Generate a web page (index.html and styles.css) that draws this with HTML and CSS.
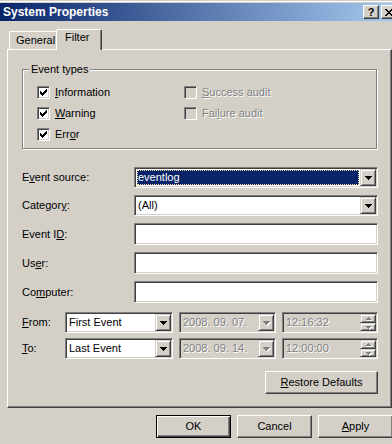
FILE: index.html
```html
<!DOCTYPE html>
<html lang="en">
<head>
    <meta charset="UTF-8">
    <meta name="viewport" content="width=device-width, initial-scale=1.0">
    <title>System Properties</title>
    <link rel="stylesheet" href="styles.css">
</head>
<body>

<div class="window">
    <!-- Title bar -->
    <div class="titlebar">
        <span class="title">System Properties</span>
        <div class="title-buttons">
            <span class="title-btn">?</span>
            <span class="title-btn">
                <svg width="8" height="7" viewBox="0 0 8 7" shape-rendering="crispEdges"><path d="M0 0h2v1h1v1h2v-1h1v-1h2v1h-1v1h-1v1h-1v1h1v1h1v1h1v1h-2v-1h-1v-1h-2v1h-1v1h-2v-1h1v-1h1v-1h1v-1h-1v-1h-1v-1h-1z"/></svg>
            </span>
        </div>
    </div>

    <!-- Tabs -->
    <div class="tabs">
        <div class="tab">General</div>
        <div class="tab active">Filter</div>
    </div>

    <div class="panel">
        <!-- Event types group -->
        <fieldset class="group">
            <legend>Event types</legend>
            <div class="checks">
                <div class="check">
                    <span class="box"><svg class="tick" width="7" height="7" viewBox="0 0 7 7" shape-rendering="crispEdges"><path d="M6 0h1v1h-1z M5 1h2v1h-2z M0 2h1v1h-1z M4 2h3v1h-3z M0 3h2v1h-2z M3 3h3v1h-3z M0 4h5v1h-5z M1 5h3v1h-3z M2 6h1v1h-1z"/></svg></span>
                    <span class="text"><u>I</u>nformation</span>
                </div>
                <div class="check disabled">
                    <span class="box"></span>
                    <span class="text"><u>S</u>uccess audit</span>
                </div>
                <div class="check">
                    <span class="box"><svg class="tick" width="7" height="7" viewBox="0 0 7 7" shape-rendering="crispEdges"><path d="M6 0h1v1h-1z M5 1h2v1h-2z M0 2h1v1h-1z M4 2h3v1h-3z M0 3h2v1h-2z M3 3h3v1h-3z M0 4h5v1h-5z M1 5h3v1h-3z M2 6h1v1h-1z"/></svg></span>
                    <span class="text"><u>W</u>arning</span>
                </div>
                <div class="check disabled">
                    <span class="box"></span>
                    <span class="text">Fai<u>l</u>ure audit</span>
                </div>
                <div class="check">
                    <span class="box"><svg class="tick" width="7" height="7" viewBox="0 0 7 7" shape-rendering="crispEdges"><path d="M6 0h1v1h-1z M5 1h2v1h-2z M0 2h1v1h-1z M4 2h3v1h-3z M0 3h2v1h-2z M3 3h3v1h-3z M0 4h5v1h-5z M1 5h3v1h-3z M2 6h1v1h-1z"/></svg></span>
                    <span class="text">Err<u>o</u>r</span>
                </div>
            </div>
        </fieldset>

        <!-- Source / category / text filters -->
        <div class="fields">
            <span class="label">E<u>v</u>ent source:</span>
            <div class="combo">
                <span class="value selected">eventlog</span>
                <span class="drop"><svg width="7" height="4" viewBox="0 0 7 4" shape-rendering="crispEdges"><path d="M0 0h7v1h-1v1h-1v1h-1v1h-1v-1h-1v-1h-1v-1h-1z"/></svg></span>
            </div>

            <span class="label">Categor<u>y</u>:</span>
            <div class="combo">
                <span class="value">(All)</span>
                <span class="drop"><svg width="7" height="4" viewBox="0 0 7 4" shape-rendering="crispEdges"><path d="M0 0h7v1h-1v1h-1v1h-1v1h-1v-1h-1v-1h-1v-1h-1z"/></svg></span>
            </div>

            <span class="label">Event I<u>D</u>:</span>
            <div class="text-field"></div>

            <span class="label">Us<u>e</u>r:</span>
            <div class="text-field"></div>

            <span class="label">Co<u>m</u>puter:</span>
            <div class="text-field"></div>
        </div>

        <!-- Date range -->
        <div class="range">
            <span class="label"><u>F</u>rom:</span>
            <div class="combo">
                <span class="value">First Event</span>
                <span class="drop"><svg width="7" height="4" viewBox="0 0 7 4" shape-rendering="crispEdges"><path d="M0 0h7v1h-1v1h-1v1h-1v1h-1v-1h-1v-1h-1v-1h-1z"/></svg></span>
            </div>
            <div class="combo disabled">
                <span class="value">2008. 09. 07.</span>
                <span class="drop"><svg width="7" height="4" viewBox="0 0 7 4" shape-rendering="crispEdges"><path d="M0 0h7v1h-1v1h-1v1h-1v1h-1v-1h-1v-1h-1v-1h-1z"/></svg></span>
            </div>
            <div class="combo disabled">
                <span class="value">12:16:32</span>
                <span class="spin">
                    <span class="spin-btn"><svg width="5" height="3" viewBox="0 0 5 3" shape-rendering="crispEdges"><path d="M2 0h1v1h1v1h1v1h-5v-1h1v-1h1z"/></svg></span>
                    <span class="spin-btn"><svg width="5" height="3" viewBox="0 0 5 3" shape-rendering="crispEdges"><path d="M0 0h5v1h-1v1h-1v1h-1v-1h-1v-1h-1z"/></svg></span>
                </span>
            </div>

            <span class="label"><u>T</u>o:</span>
            <div class="combo">
                <span class="value">Last Event</span>
                <span class="drop"><svg width="7" height="4" viewBox="0 0 7 4" shape-rendering="crispEdges"><path d="M0 0h7v1h-1v1h-1v1h-1v1h-1v-1h-1v-1h-1v-1h-1z"/></svg></span>
            </div>
            <div class="combo disabled">
                <span class="value">2008. 09. 14.</span>
                <span class="drop"><svg width="7" height="4" viewBox="0 0 7 4" shape-rendering="crispEdges"><path d="M0 0h7v1h-1v1h-1v1h-1v1h-1v-1h-1v-1h-1v-1h-1z"/></svg></span>
            </div>
            <div class="combo disabled">
                <span class="value">12:00:00</span>
                <span class="spin">
                    <span class="spin-btn"><svg width="5" height="3" viewBox="0 0 5 3" shape-rendering="crispEdges"><path d="M2 0h1v1h1v1h1v1h-5v-1h1v-1h1z"/></svg></span>
                    <span class="spin-btn"><svg width="5" height="3" viewBox="0 0 5 3" shape-rendering="crispEdges"><path d="M0 0h5v1h-1v1h-1v1h-1v-1h-1v-1h-1z"/></svg></span>
                </span>
            </div>
        </div>

        <div class="panel-footer">
            <button class="btn restore"><u>R</u>estore Defaults</button>
        </div>
    </div>

    <!-- Dialog buttons -->
    <div class="actions">
        <button class="btn default">OK</button>
        <button class="btn">Cancel</button>
        <button class="btn"><u>A</u>pply</button>
    </div>
</div>

</body>
</html>
```

FILE: styles.css
```css
* {
    box-sizing: border-box;
}

body {
    margin: 0;
    background-color: #d4d0c8;
    font-family: "Liberation Sans", Arial, sans-serif;
    font-size: 11px;
    line-height: 13px;
    color: #000;
    overflow: hidden;
}

.window {
    width: 392px;
    height: 444px;
    padding-top: 3px;
    overflow: hidden;
    background: linear-gradient(to bottom, #d4d0c8 0 1px, #fff 1px 2px, #d4d0c8 2px);
}

/* Title bar */
.titlebar {
    height: 18px;
    margin-right: -5px;
    padding-left: 3px;
    display: flex;
    align-items: center;
    justify-content: space-between;
    background: linear-gradient(to right, #0a246a, #a6caf0);
    color: #fff;
}

.title {
    font-weight: bold;
    font-size: 12px;
}

.title-buttons {
    display: flex;
    gap: 2px;
}

.title-btn {
    width: 16px;
    height: 14px;
    display: flex;
    align-items: center;
    justify-content: center;
    background-color: #d4d0c8;
    border: 1px solid;
    border-color: #fff #404040 #404040 #fff;
    box-shadow: inset -1px -1px #808080;
    color: #000;
    font-weight: bold;
    font-size: 11px;
}

/* Tabs */
.tabs {
    height: 28px;
    padding-left: 9px;
    display: flex;
    align-items: flex-end;
}

.tab {
    width: 49px;
    height: 18px;
    padding: 2px 0 0 6px;
    border: 1px solid;
    border-bottom: 0;
    border-color: #fff #404040 transparent #fff;
    border-radius: 2px 2px 0 0;
    box-shadow: inset -1px 0 #808080;
}

.tab.active {
    width: 46px;
    height: 21px;
    margin-left: -2px;
    margin-bottom: -1px;
    padding: 1px 0 0 8px;
    position: relative;
    z-index: 1;
    background-color: #d4d0c8;
}

/* Tab page */
.panel {
    width: 385px;
    margin-left: 7px;
    padding: 13px 13px 13px 14px;
    border: 1px solid;
    border-color: #fff #404040 #404040 #fff;
    box-shadow: inset -1px -1px #808080;
}

.group {
    width: 355px;
    margin: 0;
    padding: 11px 0 7px 0;
    border: 1px solid #808080;
    box-shadow: 1px 1px 0 #fff, inset 1px 1px 0 #fff;
}

.group legend {
    margin-left: 6px;
    padding: 0 2px;
    line-height: 12px;
    background-color: #d4d0c8;
}

.checks {
    padding-left: 14px;
    display: grid;
    grid-template-columns: 147px auto;
    row-gap: 8px;
}

.check {
    height: 13px;
    display: flex;
    align-items: center;
    gap: 5px;
}

.box {
    width: 13px;
    height: 13px;
    display: flex;
    align-items: center;
    justify-content: center;
    background-color: #fff;
    border: 1px solid;
    border-color: #808080 #fff #fff #808080;
    box-shadow: inset 1px 1px #404040, inset -1px -1px #d4d0c8;
}

.check.disabled .box {
    background-color: #d4d0c8;
}

.check.disabled .text,
.combo.disabled .value {
    color: #808080;
    text-shadow: 1px 1px 0 #fff;
}

/* Fields */
.fields {
    margin-top: 18px;
    display: grid;
    grid-template-columns: 112px 1fr;
    row-gap: 7px;
    align-items: center;
}

.label {
    white-space: nowrap;
}

.combo,
.text-field {
    display: flex;
    align-items: center;
    background-color: #fff;
    border: 1px solid;
    border-color: #808080 #fff #fff #808080;
    box-shadow: inset 1px 1px #404040, inset -1px -1px #d4d0c8;
    padding: 1px;
}

.combo {
    height: 21px;
}

.text-field {
    height: 22px;
}

.combo.disabled {
    background-color: #d4d0c8;
}

.combo .value {
    flex: 1;
    align-self: stretch;
    padding-left: 2px;
    display: flex;
    align-items: center;
    white-space: nowrap;
    overflow: hidden;
}

.combo .value.selected {
    margin: 1px;
    padding-left: 1px;
    background-color: #0a246a;
    color: #fff;
    outline: 1px dotted #f5db95;
    outline-offset: -1px;
}

.drop,
.spin-btn {
    display: flex;
    align-items: center;
    justify-content: center;
    background-color: #d4d0c8;
    border: 1px solid;
    border-color: #d4d0c8 #404040 #404040 #d4d0c8;
    box-shadow: inset 1px 1px #fff, inset -1px -1px #808080;
}

.drop {
    width: 16px;
    height: 17px;
}

.combo.disabled svg {
    fill: #808080;
    filter: drop-shadow(1px 1px 0 #fff);
}

.spin {
    width: 16px;
    height: 17px;
    display: flex;
    flex-direction: column;
}

.spin-btn {
    height: 9px;
}

.spin-btn + .spin-btn {
    height: 8px;
}

/* Date range */
.range {
    margin-top: 9px;
    display: grid;
    grid-template-columns: 37px 108px 97px 96px;
    column-gap: 6px;
    row-gap: 5px;
    align-items: center;
}

.panel-footer {
    margin-top: 12px;
    display: flex;
    justify-content: flex-end;
}

/* Buttons */
.btn {
    width: 75px;
    height: 23px;
    padding: 0;
    font: inherit;
    color: #000;
    background-color: #d4d0c8;
    border: 1px solid;
    border-color: #fff #404040 #404040 #fff;
    box-shadow: inset -1px -1px #808080;
}

.btn.restore {
    width: 113px;
}

.btn.default {
    border-color: #000;
    box-shadow: inset 1px 1px #fff, inset -1px -1px #404040, inset -2px -2px #808080;
}

.actions {
    margin-top: 7px;
    margin-right: -1px;
    display: flex;
    justify-content: flex-end;
    gap: 6px;
}
```
